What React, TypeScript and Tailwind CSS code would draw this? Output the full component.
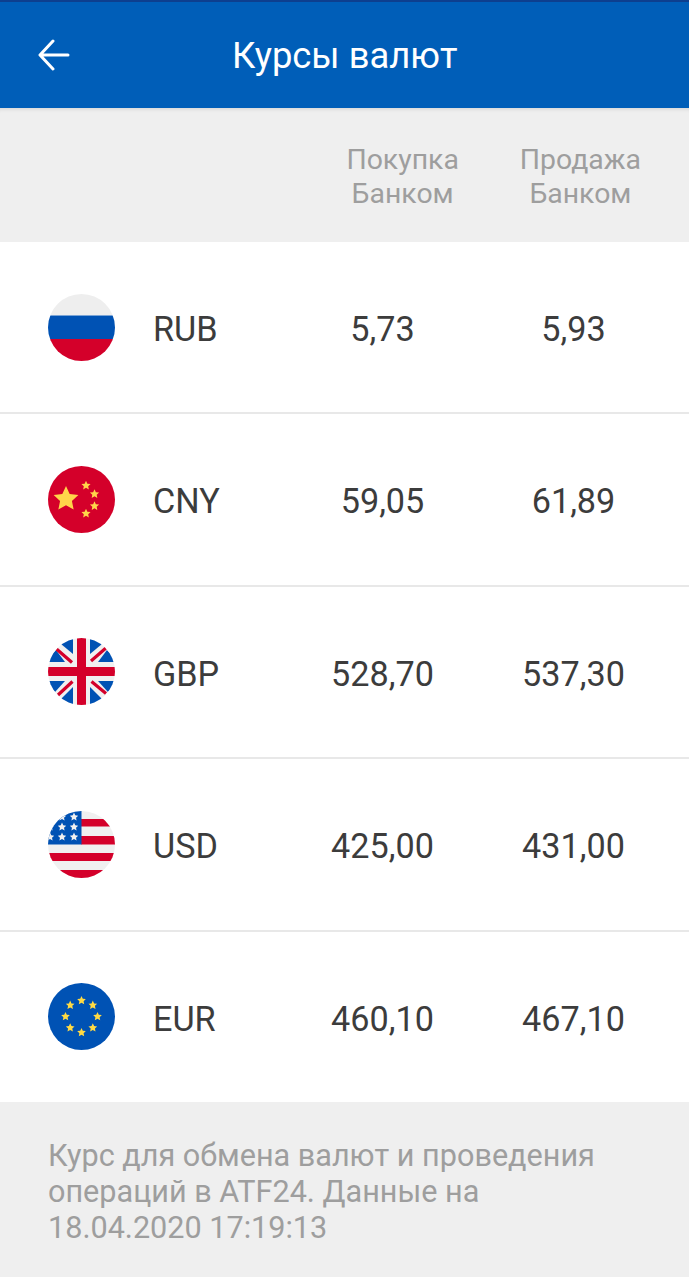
import React from 'react';

const Star = ({ x, y, r, fill }: { x: number; y: number; r: number; fill: string }) => {
  const pts = [];
  for (let i = 0; i < 10; i++) {
    const a = -Math.PI / 2 + (i * Math.PI) / 5;
    const d = i % 2 === 0 ? r : r * 0.48;
    pts.push(`${(x + d * Math.cos(a)).toFixed(2)},${(y + d * Math.sin(a)).toFixed(2)}`);
  }
  return <polygon points={pts.join(' ')} fill={fill} />;
};

const Flag = ({ id, children }: { id: string; children: React.ReactNode }) => (
  <svg viewBox="0 0 67 67" className="w-[67px] h-[67px] shrink-0">
    <clipPath id={id}>
      <circle cx="33.5" cy="33.5" r="33.5" />
    </clipPath>
    <g clipPath={`url(#${id})`}>{children}</g>
  </svg>
);

const RuFlag = () => (
  <Flag id="ru">
    <rect width="67" height="21.5" fill="#eeeeee" />
    <rect y="21.5" width="67" height="23.5" fill="#0052b4" />
    <rect y="45" width="67" height="22" fill="#d4002a" />
  </Flag>
);

const CnFlag = () => (
  <Flag id="cn">
    <rect width="67" height="67" fill="#d4002a" />
    <Star x={18} y={33} r={13} fill="#ffd54a" />
    <Star x={38} y={19.5} r={4.8} fill="#ffd54a" />
    <Star x={46.5} y={28} r={4.8} fill="#ffd54a" />
    <Star x={46.5} y={40} r={4.8} fill="#ffd54a" />
    <Star x={38} y={47.5} r={4.8} fill="#ffd54a" />
  </Flag>
);

const GbFlag = () => (
  <Flag id="gb">
    <rect width="67" height="67" fill="#f0f0f0" />
    <polygon points="25,0 25,16 13,6 18,0" fill="#0052b4" />
    <polygon points="42,0 42,16 54,6 49,0" fill="#0052b4" />
    <polygon points="0,24 17,24 8,12 2,18" fill="#0052b4" />
    <polygon points="67,24 50,24 59,12 65,18" fill="#0052b4" />
    <polygon points="0,43 17,43 7,54 2,49" fill="#0052b4" />
    <polygon points="67,43 50,43 60,54 65,49" fill="#0052b4" />
    <polygon points="25,67 25,49 13,61 18,67" fill="#0052b4" />
    <polygon points="42,67 42,49 54,61 49,67" fill="#0052b4" />
    <path d="M8.5 11 L24 24.5 M58.5 9.5 L43 23 M10 57 L24.5 43.5 M58 55.5 L43.5 43.5" stroke="#d4002a" strokeWidth="3.2" />
    <rect x="29" width="9" height="67" fill="#d4002a" />
    <rect y="29" width="67" height="9" fill="#d4002a" />
  </Flag>
);

const UsFlag = () => (
  <Flag id="us">
    <rect width="67" height="67" fill="#f0f0f0" />
    <rect x="33" y="8" width="34" height="7.5" fill="#d4002a" />
    <rect x="33" y="25" width="34" height="8.5" fill="#d4002a" />
    <rect y="42" width="67" height="8" fill="#d4002a" />
    <rect y="59" width="67" height="8" fill="#d4002a" />
    <rect width="33.5" height="33.5" fill="#0052b4" />
    {[
      [26, 6],
      [14, 6],
      [26, 16],
      [14, 16],
      [2, 16],
      [26, 26],
      [14, 26],
      [2, 26],
    ].map(([x, y], i) => (
      <Star key={i} x={x} y={y} r={4.4} fill="#f0f0f0" />
    ))}
  </Flag>
);

const EuFlag = () => (
  <Flag id="eu">
    <rect width="67" height="67" fill="#0052b4" />
    {[0, 1, 2, 3, 4, 5, 6, 7].map((i) => {
      const a = -Math.PI / 2 + (i * Math.PI) / 4;
      return <Star key={i} x={33.5 + 16 * Math.cos(a)} y={33.5 + 16 * Math.sin(a)} r={4.6} fill="#ffda44" />;
    })}
  </Flag>
);

const rows = [
  { flag: RuFlag, code: 'RUB', buy: '5,73', sell: '5,93' },
  { flag: CnFlag, code: 'CNY', buy: '59,05', sell: '61,89' },
  { flag: GbFlag, code: 'GBP', buy: '528,70', sell: '537,30' },
  { flag: UsFlag, code: 'USD', buy: '425,00', sell: '431,00' },
  { flag: EuFlag, code: 'EUR', buy: '460,10', sell: '467,10' },
];

const App: React.FC = () => {
  return (
    <div className="w-[689px] h-[1280px] bg-white font-['Roboto',sans-serif] overflow-hidden">
      <header className="relative h-[108px] bg-[#005eb8] border-t-2 border-[#0d3f8f] flex items-center">
        <svg viewBox="0 0 32 32" className="w-8 h-8 ml-[38px]" fill="none" stroke="white" strokeWidth="3" strokeLinecap="round" strokeLinejoin="round">
          <path d="M30 16 H3 M15 2 L2 16 L15 30" />
        </svg>
        <h1 className="ml-[162px] pt-[2px] text-[36.4px] leading-none text-white">Курсы валют</h1>
      </header>

      <div className="h-[134px] bg-[#efefef] flex justify-end gap-[61px] pr-[48px] pt-[35px] shadow-[inset_0_5px_4px_-4px_rgba(0,0,0,0.12)]">
        <div className="text-center text-[28.4px] leading-[34px] text-[#9e9e9e]">
          <div>Покупка</div>
          <div>Банком</div>
        </div>
        <div className="text-center text-[28.4px] leading-[34px] text-[#9e9e9e]">
          <div>Продажа</div>
          <div>Банком</div>
        </div>
      </div>

      <div>
        {rows.map((row, idx) => (
          <div
            key={row.code}
            className={`flex items-center pl-[48px] pr-[20px] text-[34.2px] text-[#3c3c3c] ${idx < rows.length - 1 ? 'h-[172.4px] border-b-2 border-[#e8e8e8]' : 'h-[170.4px]'}`}
          >
            <row.flag />
            <span className="ml-[38px] w-[134px] pt-[5px]">{row.code}</span>
            <span className="w-[191px] text-center pt-[5px]">{row.buy}</span>
            <span className="w-[191px] text-center pt-[5px]">{row.sell}</span>
          </div>
        ))}
      </div>

      <div className="h-[175px] bg-[#efefef] px-[48px] pt-[36px] text-[30.6px] leading-[36px] text-[#9e9e9e]">
        Курс для обмена валют и проведения
        <br />
        операций в ATF24. Данные на
        <br />
        18.04.2020 17:19:13
      </div>
    </div>
  );
};

export default App;
